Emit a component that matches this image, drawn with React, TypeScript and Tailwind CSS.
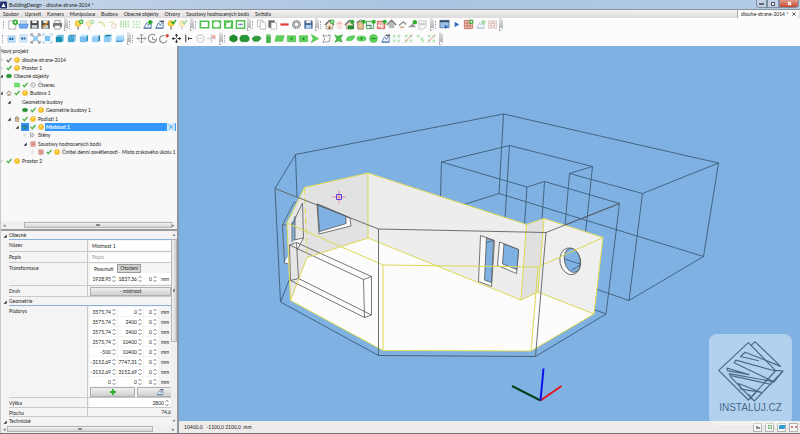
import type { ReactNode } from "react";

type IconName = string;

const G = "#4fc14f";

const plus = <path d="M9 1v5M6.500 3.500h5" stroke="#22a822" strokeWidth="2" fill="none" />;
const shot = (color: string) => (
  <g>
    <path d="M2 10L5 4l2 3 3-5v8z" fill="#eef3fa" stroke={color} strokeWidth=".9" />
    <path d="M2 10h8" stroke={color} />
  </g>
);
const cube = (front: string, top: string, side: string) => (
  <g>
    <path d="M2 4l2-2h7l-2 2z" fill={top} />
    <path d="M9 4l2-2v6l-2 2z" fill={side} />
    <path d="M2 4h7v6H2z" fill={front} />
  </g>
);
const bulb = (
  <g>
    <circle cx="5.500" cy="5" r="3.300" fill="#f9d34a" stroke="#dfaa2a" strokeWidth=".6" />
    <path d="M4.500 8.500h2v3h-2z" fill="#9a9a9a" />
  </g>
);
const badge = (
  <g>
    <circle cx="9" cy="3" r="2.500" fill="#2fae2f" />
    <path d="M9 1.600v2.800M7.600 3h2.800" stroke="#fff" strokeWidth=".8" />
  </g>
);
const house = (
  <g>
    <path d="M1 6.500L6 1.500l5 5" fill="none" stroke="#666" strokeWidth="1.300" />
    <path d="M2.500 6L6 3l3.500 3v5h-7z" fill="#f3e3c8" stroke="#888" strokeWidth=".7" />
    <path d="M5 8h2v3H5z" fill="#80552f" />
  </g>
);
const disk = (c: string, label: string) => (
  <g>
    <path d="M1.500 1.500h8l1 1v8h-9z" fill={c} />
    <path d="M3.500 1.500h5v3h-5z" fill="#eee" />
    <path d="M3 6.500h6v4H3z" fill={label} />
  </g>
);
const redGrid = (
  <g>
    <path d="M1.500 1.500h9v9h-9z" fill="#f0cac2" />
    <path d="M1.500 4.500h9M1.500 7.500h9M4.500 1.500v9M7.500 1.500v9M1.500 1.500h9v9h-9z" stroke="#c4685b" fill="none" strokeWidth=".9" />
  </g>
);

const icons: Record<IconName, ReactNode> = {
  new: (<g><path d="M2 2h5l2.500 2.500V11H2z" fill="#fff" stroke="#999" strokeWidth=".8" /><circle cx="9" cy="3.500" r="3" fill="#24a824" /><path d="M9 2v3M7.500 3.500h3" stroke="#fff" /></g>),
  open: (<g><path d="M2.500 2h7v4h-7z" fill="#d7e6f5" stroke="#8aa0b8" strokeWidth=".6" /><path d="M.8 5.500h10.400L10 10H2z" fill="#6fa8ee" stroke="#4a86d0" strokeWidth=".7" /></g>),
  save: disk("#42474d", "#c9cdd1"),
  saveas: (<g>{disk("#42474d", "#c9cdd1")}<path d="M3 9l6-6" stroke="#e08a1c" strokeWidth="1.800" /></g>),
  saveblue: disk("#46658f", "#a9d1f5"),
  print: (<g><path d="M3 1.500h6V5H3z" fill="#eee" stroke="#888" strokeWidth=".8" /><path d="M1 4.500h10V9H1z" fill="#707478" /><path d="M3 7h6v4H3z" fill="#fff" stroke="#888" strokeWidth=".8" /></g>),
  bulbadd: (<g>{bulb}{badge}</g>),
  bulbok: (<g>{bulb}<path d="M6 3l2 2 3-4" fill="none" stroke="#22a822" strokeWidth="1.600" /></g>),
  tube: <path d="M2 4l4-1 4 5" fill="none" stroke="#b6cc45" strokeWidth="2" />,
  tubeno: (<g><path d="M2 4l4-1 4 5" fill="none" stroke="#dfc77c" strokeWidth="1.500" /><circle cx="7.500" cy="7.500" r="2.500" stroke="#e58a86" fill="none" /></g>),
  grid: <path d="M2 2v8M4.700 2v8M7.300 2v8M10 2v8" stroke="#9bdc9b" strokeDasharray="2 .7" strokeWidth="1.300" />,
  dots: <path d="M2 3h8M3 6h7M2 9h8" stroke="#a2dca2" strokeWidth="1.500" strokeDasharray="1.500 1.800" />,
  shotgreen: (<g>{shot("#4a70a0")}{plus}</g>),
  shot: (<g>{shot("#4a70a0")}<path d="M6 2.500h5" stroke="#445" strokeWidth="1.300" /></g>),
  rect: <path d="M1.500 2.500h9v7h-9z" fill="#fff" stroke={G} strokeWidth="1.800" />,
  oct: (<g><path d="M1 1.500h10v9H1z" fill={G} /><path d="M4 3h4l1.500 1.500v3L8 9H4L2.500 7.500v-3z" fill="#fff" /></g>),
  poly: (<g><path d="M1 1.500h10v9H1z" fill={G} /><path d="M2.500 3L5 4.500 9 3 8 9 2.500 8.500 4 6z" fill="#fff" /></g>),
  luc: (<g><path d="M1.500 2h9v8h-9z" fill="#fff" stroke={G} strokeWidth="1.600" /><path d="M3.500 6h5" stroke="#506ea8" strokeWidth="1.800" strokeDasharray="1.300 .5" /></g>),
  copy: (<g fill="#fff" stroke="#b5b5b5" strokeWidth=".9"><path d="M1.500 1.500h6v7h-6z" /><path d="M4.500 3.500h5l1 1V11h-6z" /></g>),
  paste: (<g><path d="M1.500 1.500h7v8h-7z" fill="#666" /><path d="M4.500 4h6v7h-6z" fill="#fff" stroke="#aaa" strokeWidth=".8" /></g>),
  minus: <path d="M1.500 6h9" stroke="#e03c3c" strokeWidth="2.400" />,
  gear: (<g fill="none" stroke="#858a91"><circle cx="6" cy="6" r="4.200" strokeWidth="1.500" strokeDasharray="1.700 .6" /><circle cx="6" cy="6" r="2.700" strokeWidth="1.200" /></g>),
  house,
  houseadd: (<g>{house}{badge}</g>),
  roofpink: (<g><path d="M1.500 6L6 2l4.500 4z" fill="#f3c2bc" /><path d="M3 6h6v5H3z" fill="#fae3df" /></g>),
  housegreen: (<g>{house}<path d="M4 7h7v4H4z" fill="#218c2b" /><circle cx="9" cy="3" r="2.300" fill="#2fae2f" /></g>),
  floor: (<g><path d="M3 3h6v8H3z" fill="#e7c596" stroke="#9b7d58" /><path d="M1.500 4L6 1l4.500 3" fill="none" stroke="#666" /><circle cx="9.500" cy="3" r="2.300" fill="#2fae2f" /></g>),
  roomgreen: (<g><path d="M1.500 2.500h8v8h-8z" fill="#dff2df" stroke="#4d9d5b" /><path d="M1.500 7h5v3.500" stroke="#467" fill="none" /><circle cx="9.500" cy="3" r="2.300" fill="#2fae2f" /></g>),
  roomred: (<g><path d="M1.500 2.500h8v8h-8z" fill="#f2b5af" stroke="#d0524b" /><path d="M1.500 7h5v3.500" stroke="#fff" fill="none" /><circle cx="9.500" cy="3" r="2.300" fill="#2fae2f" /></g>),
  roof: (<g><path d="M1 6.500L6 1.500l5 5" fill="none" stroke="#777" strokeWidth="1.600" /><path d="M3 6l3-3 3 3v4H3z" fill="#b8b8b8" /></g>),
  roofslim: (<g><path d="M2 7l5-4 3 3" fill="none" stroke="#888" strokeWidth="1.400" /><path d="M3 8h5v2H3z" fill="#d8b48c" /></g>),
  roofadd: (<g><path d="M1 9l5-4 4 4z" fill="#9b9b9b" /><circle cx="8.500" cy="3.500" r="2.500" fill="#2fae2f" /></g>),
  sheet: (<g><path d="M2 2h8v6l-2.500 3H2z" fill="#f4f4f4" stroke="#bbb" strokeWidth=".8" /><path d="M3 5.500h6" stroke="#999" /></g>),
  win: (<g><path d="M1 1.500h10v8H1z" fill="#9dc1ea" stroke="#466792" strokeWidth=".8" /><path d="M1 1.500h10v2H1z" fill="#3b4e68" /><path d="M6 6l4 2.500L7 11z" fill="#2b66b8" /></g>),
  play: <path d="M4 3l5 3-5 3z" fill="#2f6fc4" />,
  redgrid: redGrid,
  redgridadd: (<g>{redGrid}{badge}</g>),
  frame: (<g><path d="M1.500 2h9v8h-9z" fill="#f7e6e4" stroke="#d3b4b0" strokeDasharray="1.200 .5" /><path d="M4 4.500h4v3H4z" fill="#fff" stroke="#c99" strokeWidth=".8" /></g>),
  d3: (<g><path d="M2 3h8v7H2z" fill="#b9defa" stroke="#92bfe4" strokeWidth=".6" /><path d="M3.500 6.500h5" stroke="#28669c" strokeWidth="2.500" strokeDasharray="2 .6" /></g>),
  d2: (<g><path d="M2 2h8v8H2z" fill="#d0e9fc" stroke="#acd0ec" strokeWidth=".6" /><path d="M3.500 6h5" stroke="#28669c" strokeWidth="2.300" strokeDasharray="2 .6" /></g>),
  fit: (<g><path d="M2 2l8 8M10 2l-8 8" stroke="#888" strokeWidth="1.100" /><path d="M3.500 3.500h5v5h-5z" fill="#8cc9f5" /><path d="M1 3.500V1h2.500M8.500 1H11v2.500M11 8.500V11H8.500M3.500 11H1V8.500" fill="none" stroke="#777" /></g>),
  fitobj: (<g><path d="M3 3h6v6H3z" fill="#7fc3f4" /><path d="M1 3.500V1h2.500M8.500 1H11v2.500M11 8.500V11H8.500M3.500 11H1V8.500" fill="none" stroke="#a3c7df" /></g>),
  c1: cube("#168fb0", "#6bbbe4", "#80c9ec"),
  c2: cube("#45a7d6", "#4195c2", "#8acdf0"),
  c3: cube("#79bff0", "#b8e0fa", "#2390b8"),
  c4: cube("#94cdf5", "#c4e5fb", "#187ea8"),
  c5: cube("#8ccaf4", "#158ab0", "#b8e0fa"),
  c6: (<g>{cube("#9cd2f8", "#c4e5fb", "#a4d7fa")}<path d="M2 9h7l2-2" stroke="#278fca" fill="none" /></g>),
  move: <path d="M6 2v8M2 6h8M4.300 2.700L6 1l1.700 1.700M4.300 9.300L6 11l1.700-1.700M2.700 4.300L1 6l1.700 1.700M9.300 4.300L11 6 9.300 7.700" fill="none" stroke="#888" />,
  rotate: (<g fill="none" stroke="#888"><path d="M9 2.500A4.500 4.500 0 1 0 10.500 6" strokeWidth="1.200" /><path d="M6 4v3h3" /></g>),
  rotatered: (<g fill="none"><path d="M6 3A4 4 0 1 0 8.500 8" stroke="#999" strokeWidth="1.400" /><circle cx="9" cy="3" r="1.800" fill="#d84a34" /></g>),
  cross: <path d="M6 1v4M6 7v4M1 6h4M7 6h4M4.500 2.500h3M4.500 9.500h3M2.500 4.500v3M9.500 4.500v3" stroke="#333" strokeWidth="1.100" />,
  mirror: <path d="M3 2v8M6 6h4M6 4.500v3" stroke="#444" strokeWidth="1.200" />,
  rotno: (<g fill="none"><circle cx="6" cy="6" r="4" stroke="#d2d2d2" strokeWidth="1.500" /><path d="M4 6h4" stroke="#ccc" /></g>),
  moveno: (<g><path d="M6 1v10M1 6h10" stroke="#d5d5d5" strokeWidth="1.500" /><circle cx="8.500" cy="4" r="2" fill="#efa59f" /></g>),
  blob: <path d="M1 5l2-2.500h6L11 5v3L9 9.500H3L1 8z" fill="#259632" stroke="#1d7c27" strokeWidth=".6" />,
  flat: <path d="M1 6l3-2.500h5L11 6 8 9H3z" fill="#2b9d36" stroke="#1d7d29" strokeWidth=".6" />,
  blob2: <path d="M2 4l4-2 4 2v4l-4 2-4-2z" fill="#1d8d2b" stroke="#156f20" strokeWidth=".6" />,
  cyl: (<g><path d="M3.500 2.500h5v7.500h-5z" fill="#42b34c" /><ellipse cx="6" cy="2.500" rx="2.500" ry="1.300" fill="#79d480" /><ellipse cx="6" cy="10" rx="2.500" ry="1" fill="#42b34c" /></g>),
  para: <path d="M2.500 3H11L9.500 9H1z" fill="#5bd45b" stroke="#43b043" strokeWidth=".6" />,
  rectp: (<g><path d="M1.500 3h9v6.500h-9z" fill="#5bd45b" stroke="#43b043" strokeWidth=".6" /><circle cx="6" cy="6.200" r="1" fill="#1a641a" /></g>),
  tri: <path d="M2.500 1.500L10.500 6l-8 4.500L4.500 6z" fill="#5bd45b" stroke="#43b043" strokeWidth=".6" />,
  polydash: <path d="M2 2l3 1.500L10 2 9 9.500 2 10l2-3.500z" fill="none" stroke="#555" strokeDasharray="1.200 .8" />,
  polyg: <path d="M2 2l3 1.500L10.500 2 8.500 6l1.500 4-4-1.500L2 10l2-3.500z" fill="#46c04a" stroke="#3a9a3a" strokeWidth=".6" />,
  leaf: <path d="M1.500 8C1.500 4 6 3 10.500 3c0 4-4 6.500-9 5z" fill="#5bd45b" stroke="#43b043" strokeWidth=".6" />,
  ell: (<g><ellipse cx="6" cy="6" rx="5" ry="2.800" fill="#5bd45b" stroke="#43b043" strokeWidth=".6" /><circle cx="6" cy="6" r="1" fill="#1a641a" /></g>),
  circ: (<g><circle cx="6" cy="6" r="4.300" fill="#5bd45b" stroke="#43b043" strokeWidth=".6" /><path d="M4 6h4" stroke="#1a641a" /></g>),
  squares: <path d="M2 2h3v3H2zM7 2h3v3H7zM2 7h3v3H2zM7 7h3v3H7z" fill="#bfe4bf" />,
  squaresno: (<g><path d="M2 2h3v3H2zM7 2h3v3H7zM2 7h3v3H2zM7 7h3v3H7z" fill="#bfe4bf" /><path d="M1.500 10.500l9-9" stroke="#e99" /></g>),
  squaresb: <path d="M2 2h3v3H2zM6 5h3v3H6zM7 8h3v2H7z" fill="#bfe4bf" />,
  eye: (<g><path d="M3 3h6v6H3z" fill="#6db6f0" /><path d="M1 3V1h2M9 1h2v2M11 9v2H9M3 11H1V9" fill="none" stroke="#7aaedc" /></g>),
  check: <path d="M1.500 5.500l3 4L11 2" fill="none" stroke="#3fae3f" strokeWidth="2.400" />,
  checkgrey: <path d="M1.500 5.500l3 4L11 2" fill="none" stroke="#4c5a4c" strokeWidth="2.200" />,
  sun: (<g><circle cx="6" cy="6" r="5" fill="#f9c623" stroke="#f3a81b" strokeWidth="1.200" /><circle cx="5" cy="4.500" r="1.800" fill="#ffe47a" /></g>),
  sunoff: <circle cx="6" cy="6" r="4.800" fill="#dcdcdc" stroke="#aeaeae" strokeWidth="1.400" />,
  greenrect: <path d="M.5 2h11v8H.5z" fill="#6be06b" stroke="#55cc55" strokeWidth=".8" />,
  room: (<g><path d="M1 1h10v10H1z" fill="#3079b7" /><path d="M1 7h5v4" fill="none" stroke="#32b050" strokeWidth="1.600" /></g>),
  wall: <path d="M1 1v10M4 1v10M4 3c5 0 5 6 0 6" fill="none" stroke="#888" strokeWidth="1.300" />,
  exp: <path d="M9.500 3v6.500H3z" fill="#333" />,
  col: <path d="M4 3l4 3-4 3z" fill="#fff" stroke="#bbb" />,
  colcut: <path d="M5 3l4 3-4 3" fill="none" stroke="#999" />,
  floorhouse: (<g><path d="M3 4h6v7H3z" fill="#e0b987" stroke="#8b6d48" /><path d="M1.500 5L6 1l4.500 4" fill="none" stroke="#555" strokeWidth="1.300" /></g>),
};

function Icon({ name, size = "size-[11px]" }: { name: IconName; size?: string }) {
  return (
    <svg viewBox="0 0 12 12" className={`${size} shrink-0`} aria-hidden="true">
      {icons[name]}
    </svg>
  );
}

type Tool = [IconName, boolean?];

function ToolGroup({ width, label, tools }: { width: string; label: string; tools: Tool[] }) {
  return (
    <div role="toolbar" aria-label={label} className={`flex h-[13px] shrink-0 items-center ${width}`}>
      <span className="h-2 w-[2px] border-l border-dotted border-gray-400" />
      <div className="flex flex-1 items-center justify-between px-[2px]">
        {tools.map(([name, faded], i) => (
          <button key={i} type="button" aria-label={name} className={`flex w-[10px] justify-center ${faded ? "opacity-40" : ""}`}>
            <Icon name={name} />
          </button>
        ))}
      </div>
      <span className="flex h-[13px] w-1 flex-col items-center justify-end rounded-r-sm bg-gradient-to-b from-[#e4e4e4] to-[#a9a9a9] pb-px">
        <span className="h-[2px] w-[2px] bg-white" />
      </span>
    </div>
  );
}

const toolRows: { width: string; label: string; tools: Tool[] }[][] = [
  [
    { width: "w-[65px]", label: "Soubor", tools: [["new"], ["open"], ["save"], ["saveas"], ["print"]] },
    { width: "w-[125px]", label: "Svítidla", tools: [["bulbadd"], ["bulbadd", true], ["tube", true], ["tubeno", true], ["grid"], ["dots"], ["shotgreen"], ["shot"], ["bulbok"], ["bulbok", true]] },
    { width: "w-[56px]", label: "Otvory", tools: [["rect"], ["oct"], ["poly"], ["luc"]] },
    { width: "w-[67px]", label: "Upravit", tools: [["copy"], ["paste"], ["minus"], ["gear"], ["saveblue"]] },
    { width: "w-[114px]", label: "Budova", tools: [["houseadd"], ["roofpink"], ["housegreen"], ["floor"], ["roomgreen"], ["roomred"], ["roof"], ["roofslim"], ["roofadd"], ["sheet"]] },
    { width: "w-[68px]", label: "Výpočet", tools: [["win"], ["play"], ["redgridadd"], ["shotgreen", true], ["frame"]] },
  ],
  [
    { width: "w-[129px]", label: "Kamera", tools: [["d3"], ["d2"], ["fit"], ["fitobj"], ["c1"], ["c2"], ["c3"], ["c4"], ["c5"], ["c6"]] },
    { width: "w-[91px]", label: "Manipulace", tools: [["move"], ["rotate"], ["rotatered"], ["cross"], ["mirror"], ["rotno"], ["moveno"]] },
    { width: "w-[219px]", label: "Obecné objekty", tools: [["blob2"], ["blob"], ["flat"], ["cyl"], ["para"], ["rectp"], ["rectp"], ["tri"], ["polydash"], ["polyg"], ["leaf"], ["ell"], ["circ"], ["shot"], ["squares"], ["squaresno"], ["squaresb"], ["squaresno"]] },
  ],
];

const menus = ["Soubor", "Upravit", "Kamera", "Manipulace", "Budova", "Obecné objekty", "Otvory", "Soustavy hodnocených bodů", "Svítidla"];

type Row = { pad: string; cells: IconName[]; text: string; selected?: boolean };

const tree: Row[] = [
  { pad: "-ml-px", cells: [], text: "Nový projekt" },
  { pad: "-ml-1", cells: ["colcut", "checkgrey", "sun"], text: "dlouhe-strane-2014" },
  { pad: "-ml-1", cells: ["colcut", "check", "sun"], text: "Prostor 1" },
  { pad: "-ml-1", cells: ["exp", "blob"], text: "Obecné objekty" },
  { pad: "ml-1", cells: ["", "greenrect", "check", "sunoff"], text: "Čtverec" },
  { pad: "-ml-1", cells: ["exp", "house", "check", "sun"], text: "Budova 1" },
  { pad: "ml-1", cells: ["exp", ""], text: "Geometrie budovy" },
  { pad: "ml-3", cells: ["", "blob", "check", "sun"], text: "Geometrie budovy 1" },
  { pad: "ml-1", cells: ["exp", "floorhouse", "check", "sun"], text: "Podlaží 1" },
  { pad: "ml-3", cells: ["exp", "room", "check", "sun"], text: "Místnost 1", selected: true },
  { pad: "ml-5", cells: ["col", "wall"], text: "Stěny" },
  { pad: "ml-5", cells: ["exp", "redgrid"], text: "Soustavy hodnocených bodů" },
  { pad: "ml-7", cells: ["col", "redgrid", "check", "sun"], text: "Činitel denní osvětlenosti - Místo zrakového úkolu 1" },
  { pad: "-ml-1", cells: ["colcut", "check", "sun"], text: "Prostor 2" },
];

function Cell({ name, light }: { name: IconName; light?: boolean }) {
  return (
    <span className={`flex h-full w-2 shrink-0 items-center justify-center ${light ? "bg-[#eef5fc]" : ""}`}>
      {name && <Icon name={name} size="size-[6px]" />}
    </span>
  );
}

function TreeRow({ row }: { row: Row }) {
  const [first, ...rest] = row.cells;
  return (
    <li role="treeitem" aria-selected={!!row.selected} className={`flex items-center whitespace-nowrap ${row.pad}`}>
      {first !== undefined && <Cell name={first} />}
      <div className={`flex h-full flex-1 items-center ${row.selected ? "mr-px bg-[#3399ff] font-bold text-white" : ""}`}>
        {rest.map((c, i) => (
          <Cell key={i} name={c} light={row.selected && i > 0} />
        ))}
        <span className={first === undefined ? "" : "pl-px"}>{row.text}</span>
        {row.selected && (
          <button type="button" aria-label="Zobrazit" className="mr-px ml-auto bg-[#d5eafd] p-px">
            <Icon name="eye" size="size-[6px]" />
          </button>
        )}
      </div>
    </li>
  );
}

function Arrows() {
  return (
    <svg viewBox="0 0 4 8" className="h-2 w-1 shrink-0" aria-hidden="true">
      <path d="M.5 3L2 1.200 3.500 3M.5 5L2 6.800 3.500 5" fill="none" stroke="#777" strokeWidth=".8" />
    </svg>
  );
}

function Spin({ value, width, label, id }: { value: string; width: string; label?: string; id?: string }) {
  return (
    <span className={`flex h-[9px] shrink-0 items-center bg-white pr-px ${width}`}>
      <input id={id} aria-label={label} defaultValue={value} className="h-2 w-full min-w-0 pr-px text-right outline-none" />
      <Arrows />
    </span>
  );
}

function Triple({ values, name }: { values: string[]; name: string }) {
  return (
    <div className="flex h-[10px] items-center gap-px">
      <Spin value={values[0]} width="w-[27px]" label={`${name} X`} />
      <Spin value={values[1]} width="w-[25px]" label={`${name} Y`} />
      <Spin value={values[2]} width="w-[14px]" label={`${name} Z`} />
      <span className="pl-[2px]">mm</span>
    </div>
  );
}

function Section({ title }: { title: string }) {
  return (
    <h2 className="flex h-[9px] items-center">
      <Cell name="exp" />
      <span className="h-full flex-1 border-b border-[#8ab0dc] leading-[8px]">{title}</span>
    </h2>
  );
}

function Field({ label, htmlFor, height, children }: { label: string; htmlFor?: string; height: string; children: ReactNode }) {
  return (
    <div className={`ml-2 flex border-b border-[#c9c9c9] ${height}`}>
      <label htmlFor={htmlFor} className="w-[79px] shrink-0 border-r border-[#c9c9c9] pt-[2px] leading-[6px]">
        {label}
      </label>
      <div className="flex min-w-0 flex-1 flex-col justify-center pl-[2px]">{children}</div>
    </div>
  );
}

const plan = [
  ["3575,74", "0", "0"],
  ["3575,74", "2400", "0"],
  ["2575,74", "2400", "0"],
  ["2575,74", "10400", "0"],
  ["-500", "10400", "0"],
  ["-3152,69", "7747,31", "0"],
  ["-3152,69", "3152,69", "0"],
  ["0", "0", "0"],
];

const greyButton = "flex items-center justify-center border border-[#b0b0b0] bg-gradient-to-b from-[#f0f0f0] to-[#cfcfcf]";

function HScroll({ thumb }: { thumb: string }) {
  return (
    <div className="flex h-2 shrink-0 items-center bg-[#efefef] px-[2px] text-[#777]">
      <span className="w-4 leading-[6px]">◂</span>
      <div className="flex h-[6px] flex-1">
        <span className={`flex items-center justify-center border border-[#b5b5b5] bg-gradient-to-b from-[#f3f3f3] to-[#d2d2d2] ${thumb}`}>
          <span className="h-[2px] w-1 bg-[#888]" />
        </span>
      </div>
      <span className="leading-[6px]">▸</span>
    </div>
  );
}

function Properties() {
  return (
    <section aria-label="Vlastnosti" className="flex h-[196px] shrink-0 overflow-hidden border-t-2 border-[#9b9b9b] bg-[#f4f4f4]">
      <div className="min-w-0 flex-1 overflow-hidden">
        <Section title="Obecné" />
        <Field label="Název" htmlFor="nazev" height="h-[12px]">
          <input id="nazev" defaultValue="Místnost 1" className="h-[9px] w-full bg-white px-[2px] outline-none" />
        </Field>
        <Field label="Popis" htmlFor="popis" height="h-[11px]">
          <input id="popis" placeholder="Popis" className="h-[9px] w-full bg-white px-[2px] outline-none placeholder:text-[#999]" />
        </Field>
        <Field label="Transformace" height="h-[23px]">
          <div role="tablist" className="flex h-[9px] items-stretch">
            <button type="button" role="tab" aria-selected="true" className="bg-white px-1 leading-[8px]">Posunutí</button>
            <button type="button" role="tab" aria-selected="false" className="border border-[#999] bg-[#d6d6d6] px-[2px] leading-[7px]">Otočení</button>
          </div>
          <div className="bg-white pt-px">
            <Triple values={["1928,95", "1837,36", "0"]} name="Posunutí" />
          </div>
        </Field>
        <Field label="Druh" htmlFor="druh" height="h-[11px]">
          <button type="button" id="druh" className={`h-[9px] ${greyButton}`}>- místnost</button>
        </Field>
        <Section title="Geometrie" />
        <Field label="Půdorys" height="h-[92px]">
          {plan.map((v, i) => (
            <Triple key={i} values={v} name={`Bod ${i + 1}`} />
          ))}
          <div className="flex h-[10px] gap-[2px]">
            <button type="button" aria-label="Přidat bod" className={`w-[45px] shrink-0 ${greyButton}`}>
              <svg viewBox="0 0 6 6" className="size-[6px]"><path d="M3 0v6M0 3h6" stroke="#2fae2f" strokeWidth="1.800" /></svg>
            </button>
            <button type="button" aria-label="Nakreslit" className={`w-[45px] shrink-0 ${greyButton}`}>
              <Icon name="shot" size="size-2" />
            </button>
          </div>
        </Field>
        <Field label="Výška" htmlFor="vyska" height="h-[10px]">
          <Spin id="vyska" value="2800" width="w-[80px]" />
        </Field>
        <Field label="Plocha" height="h-[9px]">
          <output className="text-right">74,6</output>
        </Field>
        <Section title="Technické" />
      </div>
      <div className="flex w-[6px] shrink-0 flex-col items-center bg-[#efefef]">
        <span className="h-2 text-[4px] leading-[8px] text-[#555]">▴</span>
        <span className="flex h-[103px] w-full items-center justify-center border border-[#b5b5b5] bg-gradient-to-r from-[#f3f3f3] to-[#d2d2d2]">
          <span className="h-[3px] w-[2px] bg-[#888]" />
        </span>
        <span className="mt-auto h-2 text-[4px] leading-[8px] text-[#555]">▾</span>
      </div>
    </section>
  );
}

function Scene() {
  return (
    <svg viewBox="179 46 621 375" className="min-h-0 w-full flex-1" role="img" aria-label="3D model místnosti">
      <g fill="none" stroke="#3d5b78" strokeWidth=".9">
        <path d="M275 188.500L295.500 154.500 503.500 114 718.500 163 642.500 193.500 569.500 173.500 592.500 166.500 509.500 145.500 441.500 162 527 187 544.500 181.500 619.500 203.500 546 232.500" />
        <path d="M275 188.500L280.500 302 378.500 355.500 535.500 356.500 606 314 594 309.500M619.500 203.500L606 314M642.500 193.500L629 300.500 596 289M629 300.500L703.500 256.500 718.500 163M703.500 256.500L499 193.500 464 204.500M503.500 114L499 193.500" />
        <path d="M295.500 154.500L297 197M509.500 145.500L505 219M441.500 162L440.500 197M527 187L524.500 225M544.500 181.500L542 220M569.500 173.500L565 226M592.500 166.500L585.500 233M280.500 302L290 278" />
      </g>
      <path d="M304.500 187.500L368 173 526.500 224.500 544 218.500 603 237.500 594 314 531 351 383 350.500 290.500 300.500 287 223z" fill="#fcfcfc" />
      <path d="M304.500 187.500L287 223 290.500 300.500 307 257.500z" fill="#e6e6e6" />
      <path d="M304.500 187.500L368 173V238L307 257.500z" fill="#e2e2e2" />
      <path d="M368 173L526.500 224.500 521 300 368 238z" fill="#ededed" />
      <path d="M526.500 224.500L544 218.500 538 292 521 300z" fill="#e0e0e0" />
      <path d="M544 218.500L603 237.500 594 314 538 292z" fill="#efefef" />

      <g stroke="#555" strokeWidth=".8">
        <path d="M317 204L350 218 351 226 319 234z" fill="#fafafa" />
        <path d="M317.500 204L346 216V223.500L319.500 231.500z" fill="#7fb2e3" />
        <path d="M346 216l4 2" fill="none" />
        <path d="M480.500 235.500L494.500 240.500 491.500 286.500 478.500 281.500z" fill="#f8f8f8" />
        <path d="M486.500 238L493.500 240.500 491.500 282.500 484.500 280z" fill="#7fb2e3" />
        <path d="M486 243l7-2.500" fill="none" />
        <path d="M499.500 242L518.500 249.500 516.500 273.500 497.500 265.500z" fill="#f8f8f8" />
        <path d="M504 244L518.500 249.500 517 269.500 502.500 264z" fill="#7fb2e3" />
        <ellipse cx="570.300" cy="261.300" rx="10.300" ry="13.500" transform="rotate(-12 570.300 261.300)" fill="#fafafa" />
        <ellipse cx="572.300" cy="260.300" rx="7.800" ry="12.300" transform="rotate(-12 572.300 260.300)" fill="#7fb2e3" />
        <path d="M564.500 259L580 264M572 270l8-5" fill="none" stroke="#39536c" />
      </g>
      <path d="M292 223L295 216V240L292.500 242z" fill="#7fb2e3" />
      <path d="M294 240L303 238 297 250zM284.500 263l4-8v9z" fill="#fff" />
      <g fill="none" stroke="#555" strokeWidth=".8">
        <path d="M296 202.500H294L282.500 225 284.500 263 289 264M282.500 225h4M292 222v20M295 216v24M302.500 203L303.500 238 297 250M294 240l9.500-2M302.500 203L292 225" />
        <path d="M289.500 245L296.500 242.500 371.500 276.500 363.500 279.500zM363.500 279.500L364.500 317.500 371.500 315V276.500M289.500 245L290.500 280.500 364.500 317.500M290.500 280.500L298.500 278.500 371.500 315M296.500 242.500L298.500 278.500" />
      </g>
      <g fill="none" stroke="#dcd955" strokeWidth="1">
        <path d="M304.500 187.500L368 173 526.500 224.500 544 218.500 603 237.500 594 314 531 351 383 350.500 290.500 300.500 287 223z" />
        <path d="M368 173V238L521 300 538 292 594 314M368 238L307 257.500 290.500 300.500M526.500 224.500L521 300M544 218.500L538 292M287 223L383 265 538 267 603 237.500M383 265V350.500M538 267L531 351" />
        <path d="M304.500 187.500L307 257.500" strokeDasharray="7 3" />
      </g>
      <path d="M275 188.500L378.500 229 546 232.500 535.500 356.500M378.500 229V355.500M546 232.500L619.500 203.500" fill="none" stroke="#5a6066" strokeWidth=".9" />

      <path d="M339 190.500v13M332.500 197h13" stroke="#e88c94" />
      <path d="M336.500 194.500h5v5h-5z" fill="none" stroke="#5b3fe0" />
      <g fill="none" strokeWidth="2">
        <path d="M540.500 400.500L512 386" stroke="#06401a" />
        <path d="M540.500 400.500L561.500 386" stroke="#e8121c" />
        <path d="M540.500 400.500L543.500 368.500" stroke="#0b12e6" />
      </g>
    </svg>
  );
}

function Watermark() {
  return (
    <div className="absolute right-2 bottom-2 flex h-[91px] w-[83px] flex-col items-center rounded-lg bg-white/40 pt-[6px] text-[#48698a]">
      <svg viewBox="106 58 204 188" className="h-[62px] w-[68px]" fill="none" stroke="currentColor" strokeWidth="3.500" strokeLinejoin="round" aria-hidden="true">
        <path d="M200 66L110 150 200 240 222 218" />
        <path d="M200 66L282 150 305 152 278 185 157 127 162 119 282 152" />
        <path d="M208 75L220 63 298 138 190 95 176 108 232 121" />
        <path d="M282 152L200 240M305 152L218 243 200 222" />
        <path d="M278 185L142 160 148 172 212 238M270 193L148 166" />
        <path d="M135 143L202 163 137 151z" />
        <path d="M170 190L240 217 178 207z" />
      </svg>
      <span className="font-['Liberation_Sans',sans-serif] text-[10px] leading-[12px]">INSTALUJ.CZ</span>
    </div>
  );
}

const windowButton = "flex h-2 items-center justify-center border border-t-0 border-[#7d8ea3]";

export default function App() {
  return (
    <div className="flex h-screen min-h-[434px] flex-col overflow-hidden border-b border-[#6f7479] bg-[#fcfcfc] font-[Lato,'Liberation_Sans',sans-serif] text-[5px] leading-[8px] text-[#222]">
      <header className="shrink-0">
        <div className="flex h-[9px] items-center bg-gradient-to-r from-[#c5d6e8] via-[#a9c4e2] to-[#b3cce6]">
          <svg viewBox="0 0 8 8" className="size-2 shrink-0" aria-hidden="true">
            <rect width="7" height="7" y=".5" rx="1" fill="#27306e" />
            <path d="M1.500 6l2-4 2 4z" fill="#fff" />
          </svg>
          <h1 className="pl-px">BuildingDesign - dlouhe-strane-2014 *</h1>
          <div className="mr-px ml-auto flex self-start">
            <button type="button" aria-label="Minimalizovat" className={`w-[11px] rounded-bl-sm bg-[#c3d3e5] ${windowButton}`}>
              <span className="h-[2px] w-[5px] border border-[#667] bg-white" />
            </button>
            <button type="button" aria-label="Obnovit" className={`w-3 bg-[#c3d3e5] ${windowButton}`}>
              <span className="size-1 border border-[#556] bg-white" />
            </button>
            <button type="button" aria-label="Zavřít" className={`w-5 rounded-br-sm bg-gradient-to-b from-[#e09a8c] to-[#c8432b] ${windowButton}`}>
              <svg viewBox="0 0 5 5" className="size-[5px]"><path d="M1 1l3 3M4 1L1 4" stroke="#fff" strokeWidth="1.300" /></svg>
            </button>
          </div>
        </div>
        <div className="flex h-[9px] items-stretch border-t border-[#8f949a] bg-gradient-to-b from-[#f4f2f2] to-[#dcdada]">
          <nav className="flex flex-1 gap-[6px] pl-[3px]">
            {menus.map((m) => (
              <button key={m} type="button" className="whitespace-nowrap">{m}</button>
            ))}
          </nav>
          <div className="mr-[2px] flex w-[61px] items-center justify-between border-l border-[#aaa] bg-[#fcfcfc] pr-[2px] pl-[3px]">
            <span>dlouhe-strane-2014 *</span>
            <button type="button" aria-label="Zavřít kartu">
              <svg viewBox="0 0 5 5" className="size-1"><path d="M.5 .5l4 4M4.500 .5l-4 4" stroke="#333" /></svg>
            </button>
          </div>
        </div>
        <div className="h-7">
          <div className="flex gap-px pl-[3px]">{toolRows[0].map((g) => <ToolGroup key={g.label} {...g} />)}</div>
          <div className="mt-px flex gap-px pl-[2px]">{toolRows[1].map((g) => <ToolGroup key={g.label} {...g} />)}</div>
        </div>
      </header>

      <main className="relative flex min-h-0 flex-1">
        <aside className="flex w-[179px] shrink-0 flex-col border-r-2 border-l border-r-[#8f989f] border-l-[#c9c9c9] bg-[#f8f8f8]">
          <div className="min-h-0 flex-1 overflow-hidden pt-px">
            <ul role="tree" aria-label="Projekt" className="grid h-[118px] grid-rows-[repeat(14,minmax(0,1fr))]">
              {tree.map((r, i) => <TreeRow key={i} row={r} />)}
            </ul>
          </div>
          <HScroll thumb="ml-[5px] w-full" />
          <Properties />
          <HScroll thumb="-ml-3 w-[146px]" />
        </aside>
        <div className="flex min-w-0 flex-1 flex-col bg-[#7fb2e3]">
          <Scene />
          <footer className="flex h-3 shrink-0 items-center justify-between bg-[#efebea] pr-[2px] pl-[5px]">
            <span className="whitespace-pre">10400,0   -1100,0 2100,0  mm</span>
            <div className="flex gap-[3px]">
              {["#8d8d8d", "#5fa85f", "#2f9ad0", "#c25555"].map((c, i) => (
                <button key={i} type="button" aria-label={`Pohled ${i + 1}`} className="flex size-[9px] items-center justify-center border border-[#b5b5b5] bg-[#f5f5f5]">
                  <svg viewBox="0 0 6 6" className="size-[6px]">
                    {i === 0 && <path d="M1 2h2v1h2v2H1z" fill={c} />}
                    {i === 1 && <path d="M1 1h1.500v1.500H1zM3.500 1H5v1.500H3.500zM1 3.500h1.500V5H1zM3.500 3.500H5V5H3.500z" fill={c} />}
                    {i === 2 && <path d="M0 2l1-1h5v3L5 5H0z" fill={c} />}
                    {i === 3 && <path d="M0 3h2M4 3h2" stroke={c} strokeWidth="1.500" />}
                  </svg>
                </button>
              ))}
            </div>
          </footer>
        </div>
        <Watermark />
      </main>
    </div>
  );
}
